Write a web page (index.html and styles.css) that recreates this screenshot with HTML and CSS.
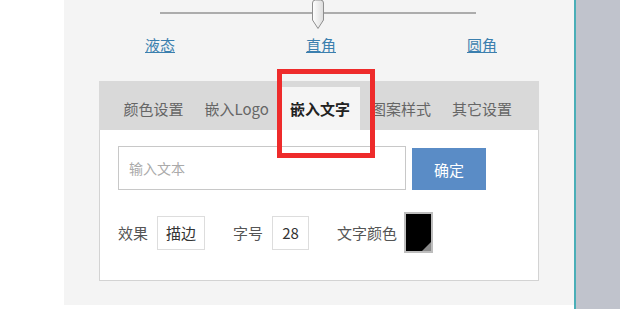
FILE: index.html
```html
<!DOCTYPE html>
<html lang="zh-CN">
<head>
<meta charset="UTF-8">
<title>二维码设置</title>
<link rel="stylesheet" href="styles.css">
</head>
<body>
<div class="page">
    <div class="gutter"></div>

    <div class="panel">
        <div class="slider">
            <div class="track">
                <svg class="thumb" width="14" height="31" viewBox="0 0 14 31">
                    <defs>
                        <linearGradient id="tg" x1="0" x2="1" y1="0" y2="0">
                            <stop offset="0" stop-color="#ffffff"/>
                            <stop offset="1" stop-color="#dcdcdc"/>
                        </linearGradient>
                    </defs>
                    <path d="M1.5 4 Q1.5 1 4.5 1 L9.5 1 Q12.5 1 12.5 4 L12.5 21 L7 29.5 L1.5 21 Z" fill="url(#tg)" stroke="#8f8f8f" stroke-width="1"/>
                </svg>
            </div>
            <div class="slider-labels">
                <a href="#">液态</a>
                <a href="#">直角</a>
                <a href="#">圆角</a>
            </div>
        </div>

        <div class="tab-box">
            <div class="tabs">
                <div class="tab">颜色设置</div>
                <div class="tab">嵌入Logo</div>
                <div class="tab active">嵌入文字</div>
                <div class="tab">图案样式</div>
                <div class="tab">其它设置</div>
            </div>
            <div class="tab-body">
                <div class="text-row">
                    <input class="text-input" type="text" placeholder="输入文本">
                    <button class="ok-btn">确定</button>
                </div>
                <div class="opt-row">
                    <span class="opt-label">效果</span>
                    <span class="opt-box">描边</span>
                    <span class="opt-label gap">字号</span>
                    <span class="opt-box num">28</span>
                    <span class="opt-label gap">文字颜色</span>
                    <span class="swatch"></span>
                </div>
            </div>
        </div>

        <!-- highlight drawn over the active tab -->
        <div class="highlight"></div>
    </div>

    <div class="divider"></div>
    <div class="side"></div>
</div>
</body>
</html>
```

FILE: styles.css
```css
body {
    margin: 0;
    background: #ffffff;
    font-family: "Noto Sans CJK SC", "Noto Sans", sans-serif;
}

.page {
    display: flex;
    height: 309px;
}

.gutter {
    width: 64px;
    flex-shrink: 0;
}

.panel {
    position: relative;
    width: 510px;
    height: 305px;
    background: #f4f4f4;
}

.divider {
    width: 2px;
    background: #4aaeb7;
}

.side {
    flex: 1;
    background: #c0c3cc;
}

/* slider */

.slider {
    width: 316px;
    margin-left: 96px;
    padding-top: 12px;
}

.track {
    position: relative;
    height: 2px;
    background: #acacac;
}

.thumb {
    position: absolute;
    left: 151px;
    top: -13px;
}

.slider-labels {
    display: flex;
    justify-content: space-between;
    margin: 21px -21px 0 -15px;
}

.slider-labels a {
    font-size: 15px;
    line-height: 20px;
    color: #3b7fae;
    text-decoration: underline;
}

/* tabs */

.tab-box {
    margin: 26px 0 0 35px;
    width: 440px;
}

.tabs {
    display: flex;
    height: 49px;
    padding: 6px 0 0 14px;
    box-sizing: border-box;
    background: #d9d9d9;
}

.tab {
    padding: 0 10.5px;
    line-height: 43px;
    font-size: 15px;
    color: #666666;
}

.tab.active {
    background: #f5f5f5;
    color: #222222;
    font-weight: bold;
}

.tab-body {
    height: 151px;
    background: #ffffff;
    border: 1px solid #d3d3d3;
    border-top: none;
    box-sizing: border-box;
    padding: 16px 0 0 18px;
}

.text-row {
    display: flex;
    align-items: flex-end;
    gap: 6px;
}

.text-input {
    width: 288px;
    height: 44px;
    box-sizing: border-box;
    border: 1px solid #c8c8c8;
    padding: 0 10px;
    font-family: inherit;
    font-size: 14px;
    outline: none;
}

.text-input::placeholder {
    color: #aaaaaa;
}

.ok-btn {
    width: 74px;
    height: 42px;
    border: none;
    background: #5a8cc6;
    color: #ffffff;
    font-family: inherit;
    font-size: 15px;
}

.opt-row {
    display: flex;
    align-items: center;
    margin-top: 22px;
    font-size: 15px;
}

.opt-label {
    color: #555555;
}

.opt-label.gap {
    margin-left: 28px;
}

.opt-box {
    margin-left: 9px;
    width: 48px;
    height: 34px;
    box-sizing: border-box;
    border: 1px solid #dddddd;
    display: flex;
    align-items: center;
    justify-content: center;
    color: #333333;
}

.opt-box.num {
    width: 37px;
}

.swatch {
    position: relative;
    margin-left: 7px;
    width: 29px;
    height: 41px;
    box-sizing: border-box;
    border: 2px solid #bdbdbd;
    background: #000000;
}

.swatch::after {
    content: "";
    position: absolute;
    right: 0;
    bottom: 0;
    border-style: solid;
    border-width: 0 0 9px 9px;
    border-color: transparent transparent #8a8a8a transparent;
}

.highlight {
    position: absolute;
    left: 213px;
    top: 69px;
    width: 98px;
    height: 89px;
    box-sizing: border-box;
    border: 5px solid #ee2b2b;
}
```
